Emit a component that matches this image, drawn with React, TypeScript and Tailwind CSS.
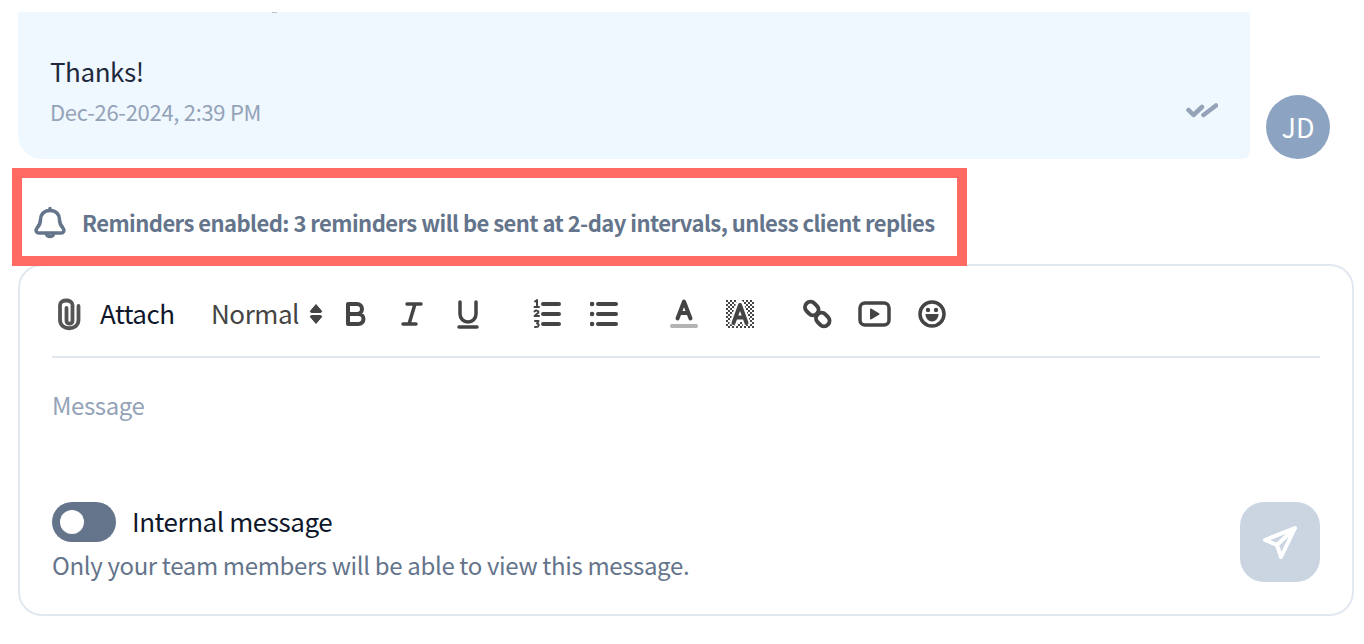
import React from "react";

const ic = "#444444";

function Tool({ w, children }: { w: number; children: React.ReactNode }) {
  return (
    <svg width={w} height="32" viewBox={`0 0 ${w} 32`} fill="none" stroke={ic} strokeWidth="3.5" strokeLinecap="round" strokeLinejoin="round" className="shrink-0">
      {children}
    </svg>
  );
}

export default function App() {
  return (
    <div className="w-[1364px] h-[644px] bg-white overflow-hidden pt-3 font-['Noto_Sans_CJK_SC','Noto_Sans',sans-serif]">
      <div className="flex items-end pl-[18px] gap-4">
        <div className="w-[1232px] h-[147px] bg-[#EFF7FF] rounded-bl-3xl rounded-br-lg px-8 pt-[41px] relative">
          <div className="absolute left-[254px] top-0 w-[5px] h-px bg-[#B8C4D4]" />
          <div className="text-[26px] leading-[36px] tracking-[-0.45px] text-[#1E293B]">Thanks!</div>
          <div className="flex justify-between items-center mt-[6px]">
            <span className="text-[22px] leading-[32px] tracking-[-0.3px] text-[#94A3B8]">Dec-26-2024, 2:39 PM</span>
            <svg width="32" height="16" viewBox="0 0 32 16" fill="none" stroke="#94A3B8" strokeWidth="4.5" strokeLinecap="round" strokeLinejoin="round">
              <path d="M2.500 7l5 5L16 4M17.500 12L30 2.500" />
            </svg>
          </div>
        </div>
        <div className="w-16 h-16 rounded-full bg-[#8CA3C2] text-white flex items-center justify-center text-[27px]">JD</div>
      </div>

      <div className="relative z-10 ml-3 mt-[9px] -mb-[2px] w-[955px] h-[98px] border-[10px] border-[#FF6B63] flex items-center gap-[15px] pl-[11px] pt-[11px]">
        <svg width="34" height="34" viewBox="0 0 34 34" fill="none" stroke="#64748B" strokeWidth="3.5" strokeLinecap="round" strokeLinejoin="round" className="shrink-0">
          <path d="M17 4.500C10.500 4.500 7.500 9 7.500 13.500C7.500 18 6 20 4 22C2 24.500 3.500 27 6 27H28C30.500 27 32 24.500 30 22C28 20 26.500 18 26.500 13.500C26.500 9 23.500 4.500 17 4.500Z" />
          <path d="M17 2.500v2M13.500 27.500c0 4 7 4 7 0" />
        </svg>
        <span className="whitespace-nowrap text-[22px] font-semibold tracking-[-0.55px] text-[#64748B] leading-[32px] pb-[2px]">Reminders enabled: 3 reminders will be sent at 2-day intervals, unless client replies</span>
      </div>

      <div className="ml-[18px] w-[1336px] h-[352px] border-2 border-[#E2E8F0] rounded-3xl px-8 relative">
        <div className="h-[92px] border-b-2 border-[#E2E8F0] flex items-center pt-[6px]">
          <div className="flex items-center w-[159px]">
            <svg width="26" height="34" viewBox="0 0 26 34" fill="none" stroke="#555555" strokeWidth="3.8" strokeLinecap="round" className="ml-[3px] shrink-0">
              <path d="M11.500 11v13c0 3.500 6 3.500 6 0V8c0-6-12.500-6-12.500 0v15c0 11 18.500 11 18.500 0V9" />
            </svg>
            <span className="ml-[19px] text-[26px] leading-[32px] pb-[2px] tracking-[-0.5px] text-[#0F172A]">Attach</span>
          </div>
          <span className="text-[26px] leading-[32px] pb-[2px] tracking-[-0.45px] text-[#444444] w-[99px]">Normal</span>
          <svg width="16" height="24" viewBox="0 0 16 24" fill={ic} stroke={ic} strokeWidth="1" strokeLinejoin="round" className="shrink-0 mr-[20px] ml-[-2px]">
            <path d="M8 2.500l5.500 6.500a1 1 0 0 1-1 1.500H3.500a1 1 0 0 1-1-1.500zM8 21.500l5.500-6.500a1 1 0 0 0-1-1.500H3.500a1 1 0 0 0-1 1.500z" />
          </svg>
          <Tool w={24}><path d="M4 6h9a4.500 4.500 0 0 1 0 10H4zM4 16h10.500a5 5 0 0 1 0 10H4z" strokeWidth="4" /></Tool>
          <div className="w-[32px] shrink-0" />
          <Tool w={24}><path d="M7 6h14M3 26h13M15 6L9 26" strokeWidth="3.500" /></Tool>
          <div className="w-[32px] shrink-0" />
          <Tool w={26}><path d="M4 4v12a8 8 0 0 0 16 0V4M3 29h18" strokeWidth="3.500" /></Tool>
          <div className="w-[51px] shrink-0" />
          <Tool w={30}>
            <path d="M10 6h16M10 16h16M10 26h16" strokeWidth="4" />
            <path d="M2 3.500l2-1.500v7M1.500 9h4.500" strokeWidth="2" />
            <path d="M1.500 13.500c1-1.500 4-1 4 .5s-2.500 2-4 4h4.500" strokeWidth="2" />
            <path d="M2 23h3.500l-1.500 2.500c2.500 0 2.500 4-2 3.500" strokeWidth="2" />
          </Tool>
          <div className="w-[27px] shrink-0" />
          <Tool w={30}>
            <path d="M8 6h18M8 16h18M8 26h18" strokeWidth="4" />
            <path d="M2 6h.1M2 16h.1M2 26h.1" strokeWidth="4.500" />
          </Tool>
          <div className="w-[50px] shrink-0" />
          <Tool w={28}>
            <path d="M7.500 20.500L14 3.500l6.500 17M10 15h8" strokeWidth="4" />
            <path d="M2 28h24" stroke="#B3B3B3" strokeWidth="4" />
          </Tool>
          <div className="w-[28px] shrink-0" />
          <svg width="28" height="28" viewBox="0 0 28 28" fill="none" className="shrink-0">
            <defs>
              <pattern id="chk" width="4" height="4" patternUnits="userSpaceOnUse">
                <rect width="2" height="2" fill="#444444" />
                <rect x="2" y="2" width="2" height="2" fill="#444444" />
              </pattern>
            </defs>
            <rect width="28" height="28" fill="url(#chk)" />
            <path d="M7 25L14 4l7 21M9.500 18h9" stroke="#ffffff" strokeWidth="8" strokeLinejoin="round" />
            <path d="M7.500 23L14 5l6.500 18M10 17.500h8" stroke="#444444" strokeWidth="4" strokeLinecap="round" strokeLinejoin="round" />
          </svg>
          <div className="w-[48px] shrink-0" />
          <Tool w={30}>
            <g strokeWidth="4">
              <rect x="2.500" y="5" width="14.500" height="11" rx="5.500" transform="rotate(45 9.750 10.500)" />
              <rect x="13.500" y="16" width="14.500" height="11" rx="5.500" transform="rotate(45 20.750 21.500)" />
            </g>
          </Tool>
          <div className="w-[26px] shrink-0" />
          <Tool w={33}>
            <rect x="2" y="5" width="29" height="22" rx="5" />
            <path d="M13 11.500v9l7.500-4.500z" fill={ic} strokeWidth="2" />
          </Tool>
          <div className="w-[27px] shrink-0" />
          <svg width="28" height="28" viewBox="0 0 28 28" fill="none" stroke={ic} strokeWidth="3.5" className="shrink-0">
            <circle cx="14" cy="14" r="12" />
            <circle cx="10" cy="10" r="2.200" fill={ic} stroke="none" />
            <circle cx="18" cy="10" r="2.200" fill={ic} stroke="none" />
            <path d="M7.500 14h13c0 4.500-3 7.500-6.500 7.500S7.500 18.500 7.500 14z" fill={ic} stroke="none" />
          </svg>
        </div>

        <div className="mt-[30px] text-[24px] leading-[34px] tracking-[-0.4px] text-[#94A3B8]">Message</div>

        <div className="mt-[80px] flex items-center gap-4">
          <div className="w-16 h-10 rounded-full bg-[#64748B] flex items-center pl-2">
            <div className="w-6 h-6 rounded-full bg-white" />
          </div>
          <span className="text-[26px] leading-[36px] pb-[2px] tracking-[-0.44px] text-[#0F172A]">Internal message</span>
        </div>
        <div className="mt-[6px] text-[24px] leading-[34px] tracking-[-0.35px] text-[#64748B]">Only your team members will be able to view this message.</div>

        <div className="absolute right-8 bottom-[32px] w-20 h-20 rounded-3xl bg-[#CBD5E1] flex items-center justify-center">
          <svg width="36" height="36" viewBox="0 0 36 36" fill="none" stroke="#ffffff" strokeWidth="4" strokeLinecap="round" strokeLinejoin="round">
            <path d="M33 4L3 16l12 5 4 12zM33 4L15 21" />
          </svg>
        </div>
      </div>
    </div>
  );
}
